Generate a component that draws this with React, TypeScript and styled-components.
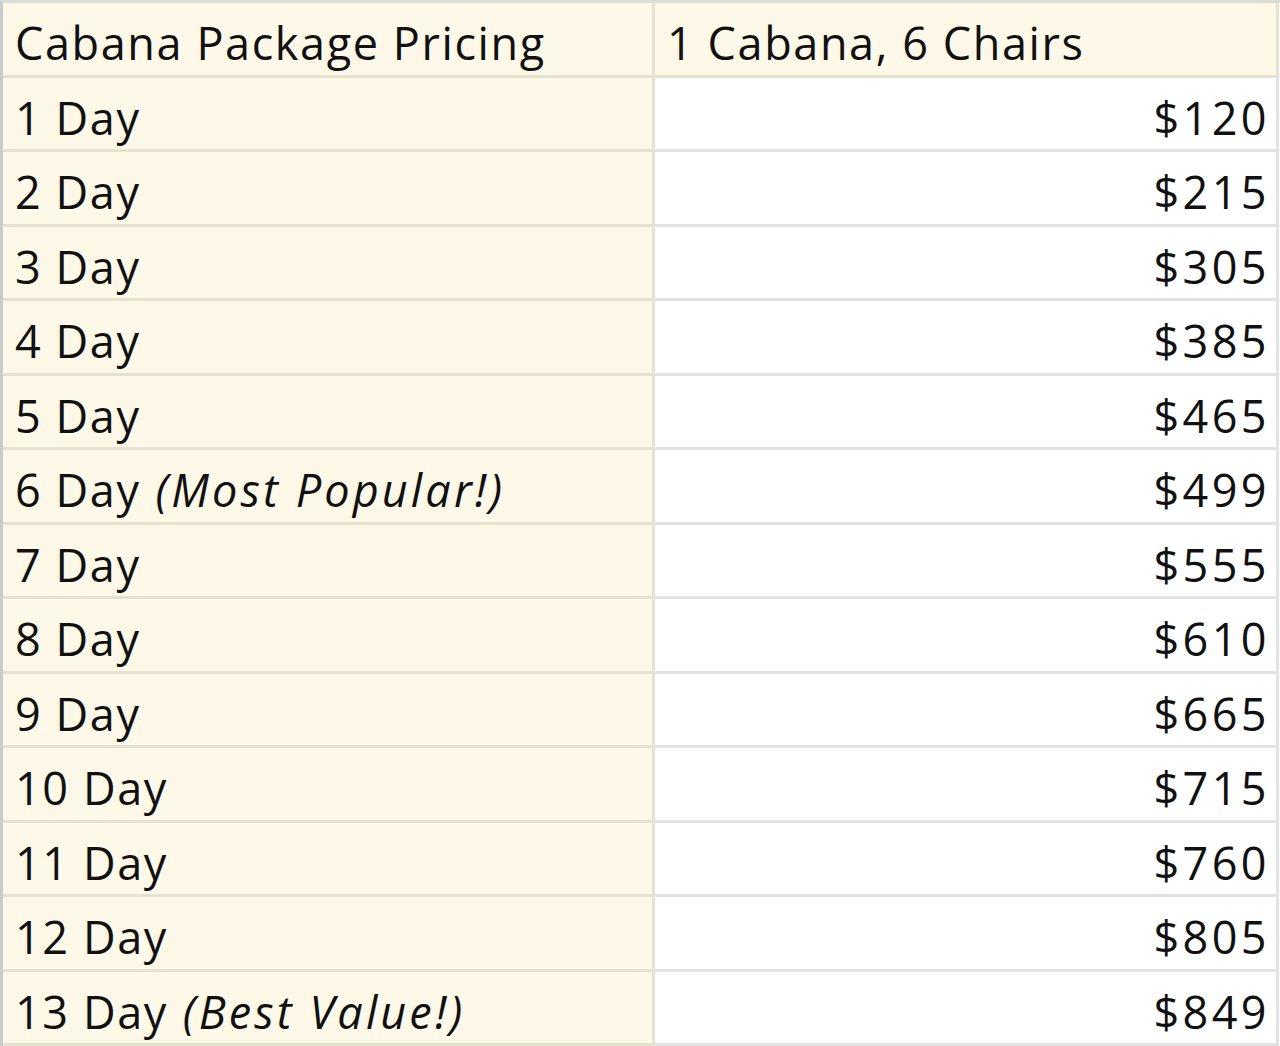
import React from 'react'
import styled, { createGlobalStyle } from 'styled-components';

type Trow = {
  label: string;
  note?: string;
  price: string;
}

const rows: Trow[] = [
  { label: '1 Day', price: '$120' },
  { label: '2 Day', price: '$215' },
  { label: '3 Day', price: '$305' },
  { label: '4 Day', price: '$385' },
  { label: '5 Day', price: '$465' },
  { label: '6 Day', note: '(Most Popular!)', price: '$499' },
  { label: '7 Day', price: '$555' },
  { label: '8 Day', price: '$610' },
  { label: '9 Day', price: '$665' },
  { label: '10 Day', price: '$715' },
  { label: '11 Day', price: '$760' },
  { label: '12 Day', price: '$805' },
  { label: '13 Day', note: '(Best Value!)', price: '$849' },
]

const App: React.FC = () => {
  return (
    <>
      <GlobalStyle />
      <Sheet>
        <Cell $tone="cream">Cabana Package Pricing</Cell>
        <Cell $tone="cream">1 Cabana, 6 Chairs</Cell>
        {rows.map((r) => (
          <React.Fragment key={r.label}>
            <Cell $tone="cream">
              {r.label}
              {r.note && <Note> {r.note}</Note>}
            </Cell>
            <Cell $tone="white" $right>
              <Price>{r.price}</Price>
            </Cell>
          </React.Fragment>
        ))}
      </Sheet>
    </>
  )
}

export default App;

const GlobalStyle = createGlobalStyle`
  html, body {
    margin: 0;
    padding: 0;
    background: #ffffff;
  }
`

const Sheet = styled.div`
  display: grid;
  grid-template-columns: 652px 624px;
  grid-template-rows: repeat(14, 1fr);
  height: 1046px;
  box-sizing: border-box;
  border-top: 3px solid #dcdcd6;
  border-left: 3px solid #c9ccce;
  font-family: "Open Sans", Lato, sans-serif;
  color: #111111;
`

const Cell = styled.div<{ $tone: 'cream' | 'white'; $right?: boolean }>`
  display: flex;
  align-items: center;
  justify-content: ${(p) => (p.$right ? 'flex-end' : 'flex-start')};
  box-sizing: border-box;
  padding: 8px ${(p) => (p.$right ? '6px' : '10px')} 0 12px;
  background: ${(p) => (p.$tone === 'cream' ? '#fdf8e7' : '#ffffff')};
  border-right: 3px solid ${(p) => (p.$tone === 'cream' ? '#e6e2d0' : '#e2e2e2')};
  border-bottom: 3px solid ${(p) => (p.$tone === 'cream' ? '#e6e2d0' : '#e2e2e2')};
  font-size: 45px;
  letter-spacing: 1.6px;
  white-space: pre;
`

const Note = styled.span`
  font-style: italic;
  letter-spacing: 3.1px;
`

const Price = styled.span`
  letter-spacing: 3.4px;
`
